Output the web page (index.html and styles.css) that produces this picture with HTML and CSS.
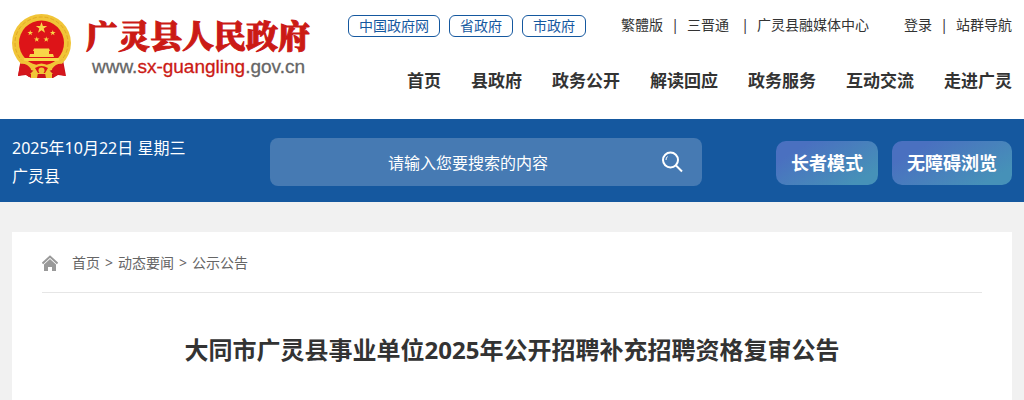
FILE: index.html
```html
<!DOCTYPE html>
<html lang="zh-CN">
<head>
<meta charset="utf-8">
<meta name="viewport" content="width=device-width, initial-scale=1">
<title>大同市广灵县事业单位2025年公开招聘补充招聘资格复审公告</title>
<link rel="stylesheet" href="styles.css">
</head>
<body>
<header class="header wrap">
  <a class="brand" href="#">
    <svg class="emblem" viewBox="0 0 60 66" aria-hidden="true">
      <path d="M9 46L6 62L14 61L19 64L41 64L46 61L54 62L51 46Z" fill="#c9141c"/>
      <ellipse cx="29.500" cy="29" rx="29.500" ry="29" fill="#f1c537"/>
      <ellipse cx="29.500" cy="29" rx="26.500" ry="26" fill="none" stroke="#e2a925" stroke-width="1" stroke-dasharray="4 2"/>
      <circle cx="29.500" cy="29" r="22.500" fill="#dd1418"/>
      <g fill="#f8d648">
        <path id="star" d="M29.500 8l1.400 4h4.300l-3.500 2.600 1.300 4.100-3.500-2.500-3.500 2.500 1.300-4.100-3.500-2.600h4.300z"/>
        <use href="#star" transform="translate(3.500 12) scale(.5)"/>
        <use href="#star" transform="translate(26 12) scale(.5)"/>
        <use href="#star" transform="translate(10 18.500) scale(.5)"/>
        <use href="#star" transform="translate(19.500 18.500) scale(.5)"/>
        <path d="M22 34.500h15l1 2.500h-1v3h4l1 3H17l1-3h4v-3h-1zM12 44h35v3H12z"/>
      </g>
      <path d="M8 46Q16 46 22 52Q29.500 47 37 52Q43 46 51 46L48 52Q42 51 37 56L41 60H18L22 56Q17 51 11 52Z" fill="#f1c537"/>
      <path d="M23 54Q29.500 50 36 54L33 59H26Z" fill="#dd1418"/>
      <circle cx="29.500" cy="56.500" r="3" fill="#f1c537"/>
      <path d="M8 50Q15 49 19 55L17 63L13 60L6 62ZM51 50Q44 49 40 55L42 63L46 60L53 62Z" fill="#d5161c"/>
      <path d="M19 59h7l-1 5h-6zM33 59h7v5h-6z" fill="#f1c537"/>
    </svg>
    <span class="brand-text">
      <span class="brand-name">广灵县人民政府</span>
      <span class="brand-url">www.<span class="brand-domain">sx-guangling</span>.gov.cn</span>
    </span>
  </a>
  <div class="header-side">
    <div class="top-links">
      <div class="gov-links">
        <a class="pill" href="#">中国政府网</a>
        <a class="pill" href="#">省政府</a>
        <a class="pill" href="#">市政府</a>
      </div>
      <div class="link-group">
        <a href="#">繁體版</a><span class="bar">|</span><a href="#">三晋通</a><span class="bar bar-wide">|</span><a href="#">广灵县融媒体中心</a>
      </div>
      <div class="link-group">
        <a href="#">登录</a><span class="bar">|</span><a href="#">站群导航</a>
      </div>
    </div>
    <nav class="nav">
      <a href="#">首页</a>
      <a href="#">县政府</a>
      <a href="#">政务公开</a>
      <a href="#">解读回应</a>
      <a href="#">政务服务</a>
      <a href="#">互动交流</a>
      <a href="#">走进广灵</a>
    </nav>
  </div>
</header>
<div class="band">
  <div class="band-inner wrap">
    <div class="date">2025年10月22日 星期三<br>广灵县</div>
    <form class="search">
      <input class="search-input" type="text" placeholder="请输入您要搜索的内容" aria-label="请输入您要搜索的内容">
      <button class="search-button" type="button" aria-label="搜索">
        <svg class="search-icon" viewBox="0 0 22 22" fill="none" stroke="#fff" stroke-width="2" aria-hidden="true">
          <circle cx="9.500" cy="9" r="7.500"/>
          <path d="M15 14.500l6 6"/>
          <path d="M5 9a4.500 4.500 0 0 1 1.500-3.500" stroke-width="1"/>
        </svg>
      </button>
    </form>
    <div class="modes">
      <button class="mode" type="button">长者模式</button>
      <button class="mode" type="button">无障碍浏览</button>
    </div>
  </div>
</div>
<div class="wrap">
  <main class="card">
    <nav class="crumbs" aria-label="当前位置">
      <svg class="home" viewBox="0 0 16 16" aria-hidden="true">
        <path d="M.5 8.500L8 1.500l7.500 7" fill="none" stroke="#999" stroke-width="2"/>
        <path d="M2 9.500L8 4l6 5.500V16h-4v-4H6v4H2z" fill="#999"/>
      </svg>
      <a href="#">首页</a><span>&gt;</span><a href="#">动态要闻</a><span>&gt;</span><a href="#">公示公告</a>
    </nav>
    <h1 class="title">大同市广灵县事业单位2025年公开招聘补充招聘资格复审公告</h1>
  </main>
</div>
</body>
</html>
```

FILE: styles.css
```css
* {
  box-sizing: border-box;
}

body {
  margin: 0;
  background: #f1f1f1;
  color: #333;
  font: 14px/22px "Noto Sans", "Noto Sans CJK SC", sans-serif;
}

a {
  color: inherit;
  text-decoration: none;
}

.wrap {
  padding-right: 12px;
  padding-left: 12px;
}

.header {
  display: flex;
  justify-content: space-between;
  align-items: flex-start;
  padding-top: 14px;
  padding-bottom: 25px;
  background: #fff;
}

.brand {
  display: flex;
  gap: 14px;
}

.emblem {
  width: 60px;
  height: 66px;
}

.brand-text {
  display: flex;
  flex-direction: column;
  white-space: nowrap;
}

.brand-name {
  color: #cb1a15;
  font: 900 32px/40px "Noto Serif CJK SC", "Noto Sans CJK SC", serif;
  -webkit-text-stroke: 1px;
}

.brand-url {
  padding-left: 6px;
  color: #666;
  font: 19px/26px "Liberation Sans", Arial, sans-serif;
  -webkit-text-stroke: 0.3px;
}

.brand-domain {
  color: #cb1a15;
}

.header-side {
  display: flex;
  flex-direction: column;
  align-items: flex-end;
  gap: 31px;
  white-space: nowrap;
}

.top-links {
  display: flex;
  gap: 35px;
  padding-top: 1px;
}

.gov-links {
  display: flex;
  gap: 9px;
}

.pill {
  padding: 0 10px;
  border: 1px solid #15589f;
  border-radius: 6px;
  color: #15589f;
  line-height: 20px;
}

.link-group {
  display: flex;
  line-height: 20px;
}

.bar {
  width: 24px;
  text-align: center;
}

.bar-wide {
  width: 28px;
  padding-left: 4px;
}

.nav {
  display: flex;
  gap: 30px;
  font-size: 17px;
  font-weight: 700;
  line-height: 26px;
}

.band {
  background: #15589f;
  color: #fff;
}

.band-inner {
  display: flex;
  align-items: center;
  min-height: 83px;
}

.date {
  flex: 0 0 258px;
  padding-top: 2px;
  font-size: 16px;
  line-height: 28px;
}

.search {
  display: flex;
  flex: 1;
  min-width: 0;
  max-width: 432px;
  height: 48px;
  margin-top: 2px;
  border-radius: 8px;
  background: #467ab3;
}

.search-input {
  flex: 1;
  min-width: 0;
  padding: 2px 0 0 24px;
  border: 0;
  background: none;
  color: #fff;
  font: inherit;
  font-size: 16px;
  text-align: center;
}

.search-input::placeholder {
  color: #fff;
  opacity: 1;
}

.search-button {
  display: grid;
  flex: 0 0 60px;
  place-items: center;
  padding: 0;
  border: 0;
  background: none;
}

.search-icon {
  width: 22px;
  height: 22px;
}

.modes {
  display: flex;
  gap: 14px;
  margin-top: 4px;
  margin-left: auto;
}

.mode {
  height: 44px;
  padding: 0 15px;
  border: 0;
  border-radius: 10px;
  background: linear-gradient(150deg, #4a70c0 20%, #4691b8 85%);
  color: #fff;
  font: inherit;
  font-size: 18px;
  font-weight: 700;
  white-space: nowrap;
}

.card {
  margin-top: 30px;
  padding: 0 30px 32px;
  background: #fff;
}

.crumbs {
  display: flex;
  align-items: center;
  gap: 5px;
  height: 61px;
  padding-top: 2px;
  border-bottom: 1px solid #e6e6e6;
  color: #666;
}

.home {
  width: 16px;
  height: 16px;
  margin-right: 9px;
}

.title {
  margin: 0;
  padding-top: 39px;
  font-size: 24px;
  line-height: 36px;
  text-align: center;
}
```
